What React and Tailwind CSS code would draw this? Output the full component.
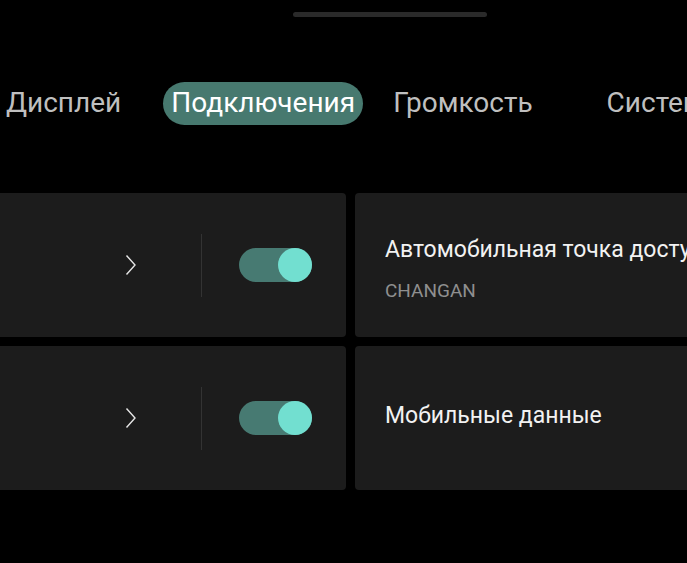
import React from "react";

function Toggle() {
  return (
    <div className="relative h-[34px] w-[73px] rounded-full bg-[#477a72]">
      <div className="absolute right-0 top-0 h-[34px] w-[34px] rounded-full bg-[#72dfd0]" />
    </div>
  );
}

function Chevron() {
  return (
    <svg width="12" height="22" viewBox="0 0 12 22" fill="none">
      <path d="M1.5 1.5 L10 11 L1.5 20.5" stroke="#e6e6e6" strokeWidth="1.4" />
    </svg>
  );
}

function LeftCard() {
  return (
    <div className="flex h-[144px] w-[346px] shrink-0 items-center rounded-r-[4px] bg-[#1c1c1c]">
      <div className="ml-[125px] flex w-[12px] justify-center">
        <Chevron />
      </div>
      <div className="ml-[64px] h-[63px] w-px bg-[#333333]" />
      <div className="ml-[37px]">
        <Toggle />
      </div>
    </div>
  );
}

function RightCard({ title, sub }) {
  return (
    <div
      className={
        "flex h-[144px] min-w-0 flex-1 flex-col overflow-hidden rounded-l-[4px] bg-[#1c1c1c] pl-[30px] " +
        (sub ? "pt-[43px]" : "justify-center pb-[4px]")
      }
    >
      <div className="whitespace-nowrap text-[23px] leading-[28px] text-[#f2f2f2]">{title}</div>
      {sub && (
        <div className="mt-[16px] text-[19px] leading-[22px] text-[#8f8f8f]">{sub}</div>
      )}
    </div>
  );
}

export default function App() {
  return (
    <div
      className="h-[563px] w-[687px] overflow-hidden bg-black"
      style={{ fontFamily: "Roboto, 'Noto Sans', sans-serif" }}
    >
      <div className="flex justify-center pt-[12px]">
        <div className="ml-[93px] h-[5px] w-[194px] rounded-full bg-[#2a2a2a]" />
      </div>
      <div className="mt-[64px] flex h-[44px] items-center overflow-hidden whitespace-nowrap text-[28px] text-[#bfbfbf]">
        <div className="ml-[6px] shrink-0">Дисплей</div>
        <div className="ml-[42px] flex h-[43px] w-[200px] shrink-0 items-center justify-center rounded-full bg-[#47796f] text-white">
          Подключения
        </div>
        <div className="ml-[30px] shrink-0">Громкость</div>
        <div className="ml-[74px] shrink-0">Система</div>
      </div>
      <div className="mt-[68px] flex flex-col gap-[9px]">
        <div className="flex gap-[9px]">
          <LeftCard />
          <RightCard title="Автомобильная точка доступа" sub="CHANGAN" />
        </div>
        <div className="flex gap-[9px]">
          <LeftCard />
          <RightCard title="Мобильные данные" />
        </div>
      </div>
    </div>
  );
}
